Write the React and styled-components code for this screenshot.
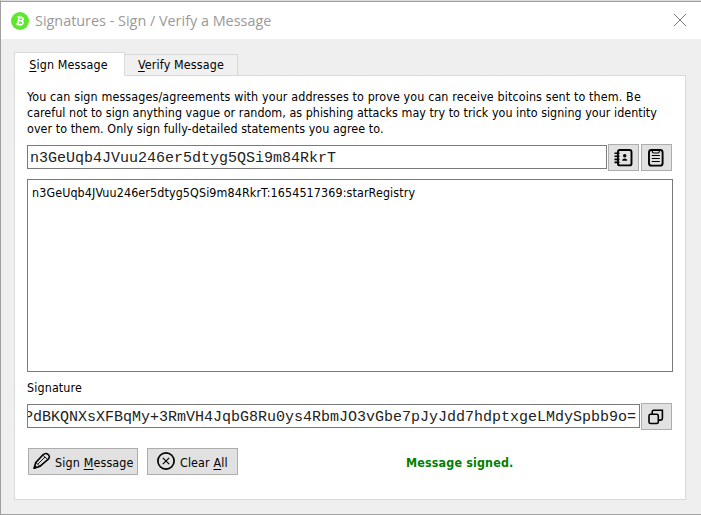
import React from "react";
import styled, { createGlobalStyle } from "styled-components";

const Global = createGlobalStyle`
  * { box-sizing: border-box; }
  html, body { margin: 0; padding: 0; background: #fff; overflow: hidden; }
`;

const Window = styled.main`
  width: 701px;
  height: 515px;
  display: flex;
  flex-direction: column;
  border-top: 1px solid #dcdcdc;
  border-left: 1px solid #a0a0a0;
  border-bottom: 1px solid #a0a0a0;
  background: #efefef;
  font-family: "DejaVu Sans Condensed", "DejaVu Sans", sans-serif;
  font-stretch: condensed;
  font-size: 12.4px;
  color: #000;
  overflow: hidden;
`;

const TitleBar = styled.header`
  height: 38px;
  flex: none;
  display: flex;
  align-items: center;
  padding: 0 14px 0 10px;
  border-top: 1px solid #a0a0a0;
  background: #fff;
`;

const Title = styled.h1`
  flex: 1;
  margin: 0 0 0 6px;
  font: 400 14.4px/20px "Open Sans", sans-serif;
  color: #999;
  white-space: nowrap;
`;

const CloseButton = styled.button`
  width: 14px;
  height: 14px;
  padding: 0;
  border: 0;
  background: none;
  margin-bottom: 1px;
`;

const Svg = styled.svg`
  display: block;
  flex: none;
`;

const TabBar = styled.nav`
  display: flex;
  align-items: flex-end;
  height: 24px;
  flex: none;
  margin: 13px 0 0 13px;
  position: relative;
`;

const Tab = styled.button`
  width: ${(p) => p.$width}px;
  height: ${(p) => (p.$active ? 24 : 22)}px;
  padding: ${(p) => (p.$active ? "2px 2px 0 0" : "0")};
  border: 1px solid #d9d9d9;
  border-left-width: ${(p) => (p.$active ? 1 : 0)}px;
  border-bottom-color: ${(p) => (p.$active ? "#fff" : "#d9d9d9")};
  background: ${(p) => (p.$active ? "#fff" : "#f0f0f0")};
  font: inherit;
  line-height: 20px;
  letter-spacing: ${(p) => p.$spacing}px;
  color: #000;
  white-space: nowrap;
`;

const Key = styled.u`
  text-decoration: underline;
  text-underline-offset: 2px;
  text-decoration-thickness: 1px;
  text-decoration-skip-ink: none;
`;

const Panel = styled.section`
  width: 672px;
  height: 425px;
  flex: none;
  margin: -1px 0 0 13px;
  padding: 13px 12px 0;
  border: 1px solid #d9d9d9;
  background: #fff;
`;

const Intro = styled.p`
  margin: 0;
  height: 55px;
  line-height: 16px;
`;

const Line = styled.span`
  display: block;
  white-space: nowrap;
  letter-spacing: ${(p) => p.$spacing}px;
`;

const FieldRow = styled.div`
  display: flex;
  align-items: flex-start;
  height: 27px;
  margin-top: ${(p) => p.$top || 0}px;
`;

const Field = styled.div`
  width: ${(p) => p.$width}px;
  height: 24px;
  flex: none;
  margin: 1px 1px 0 0;
  display: flex;
  justify-content: ${(p) => (p.$end ? "flex-end" : "flex-start")};
  padding: 0 3px 0 ${(p) => (p.$end ? 0 : 2)}px;
  border: 1px solid #7a7a7a;
  background: #fff;
  overflow: hidden;
  font: 15px/25px "Liberation Mono", monospace;
  color: #222;
  white-space: nowrap;
`;

const IconButton = styled.button`
  width: 31px;
  height: 27px;
  flex: none;
  margin-right: 2px;
  padding: 0 1px 0 0;
  display: flex;
  align-items: center;
  justify-content: center;
  border: 1px solid #adadad;
  background: #e1e1e1;
`;

const MessageBox = styled.div`
  width: 646px;
  height: 193px;
  margin-top: 8px;
  padding: 5px 4px;
  border: 1px solid #7a7a7a;
  line-height: 16px;
`;

const Label = styled.div`
  margin-top: 8px;
  height: 16px;
  line-height: 16px;
  letter-spacing: ${(p) => p.$spacing}px;
`;

const Actions = styled.footer`
  display: flex;
  align-items: center;
  margin: 18px 0 0 1px;
`;

const ActionButton = styled.button`
  width: ${(p) => p.$width}px;
  height: 27px;
  margin-right: 9px;
  padding: 0 0 1px ${(p) => p.$left}px;
  display: flex;
  align-items: center;
  gap: ${(p) => p.$gap}px;
  border: 1px solid #adadad;
  background: #e1e1e1;
  font: inherit;
  line-height: 16px;
  color: #000;
  white-space: nowrap;
  letter-spacing: ${(p) => p.$spacing}px;
`;

const Caption = styled.span`
  padding-top: 3px;
`;

const Status = styled.strong`
  margin-left: 159px;
  padding-top: 2px;
  line-height: 16px;
  color: #008000;
  letter-spacing: ${(p) => p.$spacing}px;
`;

const CoinIcon = () => (
  <Svg width="18" height="18" viewBox="0 0 18 18">
    <circle cx="9" cy="9" r="9" fill="#5fe62f" />
    <g transform="rotate(10 9 9)" fill="none" stroke="#fff" strokeWidth="1.5">
      <path d="M5.6 5.5h4.6a1.6 1.6 0 0 1 0 3.3H7.3h3.2a1.8 1.8 0 0 1 0 3.6H5.6M7.4 5.5v6.9" />
      <path d="M7.9 3.9v1.6M9.8 3.9v1.6M7.9 12.4V14M9.8 12.4V14" strokeWidth="1" />
    </g>
  </Svg>
);

const CloseIcon = () => (
  <Svg width="14" height="14" viewBox="0 0 14 14">
    <path d="M1 1l12 12M13 1L1 13" stroke="#777" strokeWidth="1" />
  </Svg>
);

const AddressBookIcon = () => (
  <Svg width="20" height="20" viewBox="0 0 20 20" fill="none" stroke="#000">
    <rect x="4.9" y="2" width="13.6" height="15.4" rx="2" strokeWidth="1.9" />
    <path d="M1.5 5.3h5M1.5 8.3h5M1.5 11.4h5M1.5 14.4h5" strokeWidth="1.6" />
    <circle cx="11.7" cy="7.8" r="1.7" fill="#000" stroke="none" />
    <path d="M9.2 12.8c0-3 5-3 5 0z" fill="#000" stroke="none" />
  </Svg>
);

const ClipboardIcon = () => (
  <Svg width="20" height="20" viewBox="0 0 20 20" fill="none" stroke="#000">
    <rect x="3" y="2" width="13.6" height="15.6" rx="2.4" strokeWidth="1.9" />
    <path d="M6.3 2.2v1.4q0 1.4 1.4 1.4h4.2q1.4 0 1.4-1.4V2.2" strokeWidth="1.1" />
    <path d="M5.8 7.5h8M5.8 10.5h8M5.8 13.5h8" strokeWidth="1.1" />
  </Svg>
);

const CopyIcon = () => (
  <Svg width="20" height="20" viewBox="0 0 20 20" fill="none" stroke="#000" strokeWidth="1.6">
    <rect x="3" y="7.3" width="9.3" height="9.2" rx="1.6" />
    <path d="M6.2 7V4.9Q6.2 3.3 7.8 3.3h8.6v8.2q0 1.6-1.6 1.6H12.6" />
  </Svg>
);

const PencilIcon = () => (
  <Svg width="18" height="18" viewBox="0 0 18 18" fill="none" stroke="#000" strokeLinejoin="round">
    <path d="M1.1 16.3L2.7 10.6 10 2.8Q12.6.5 15 2.3t.6 4.6L7.2 14.2z" strokeWidth="1.6" />
    <path d="M2.8 10.6l4.3 3.7M4.8 12.2L12 5M9.9 3.2l4.8 4.3" strokeWidth="0.9" />
    <path d="M1.1 16.3l.8-2.8 2 1.9z" fill="#000" />
  </Svg>
);

const ClearIcon = () => (
  <Svg width="18" height="18" viewBox="0 0 18 18" fill="none" stroke="#000">
    <circle cx="9" cy="9" r="8.1" strokeWidth="1.7" />
    <path d="M5.8 5.8l6.4 6.4M12.2 5.8l-6.4 6.4" strokeWidth="1.2" />
  </Svg>
);

export default function App() {
  return (
    <>
      <Global />
      <Window>
        <TitleBar>
          <CoinIcon />
          <Title>Signatures - Sign / Verify a Message</Title>
          <CloseButton aria-label="Close"><CloseIcon /></CloseButton>
        </TitleBar>
        <TabBar>
          <Tab $active $width={111} $spacing={0.15}><Key>S</Key>ign Message</Tab>
          <Tab $width={113} $spacing={0.15}><Key>V</Key>erify Message</Tab>
        </TabBar>
        <Panel>
          <Intro>
            <Line $spacing={0.13}>You can sign messages/agreements with your addresses to prove you can receive bitcoins sent to them. Be</Line>
            <Line $spacing={0.035}>careful not to sign anything vague or random, as phishing attacks may try to trick you into signing your identity</Line>
            <Line $spacing={0.07}>over to them. Only sign fully-detailed statements you agree to.</Line>
          </Intro>
          <FieldRow>
            <Field $width={580}>n3GeUqb4JVuu246er5dtyg5QSi9m84RkrT</Field>
            <IconButton aria-label="Choose address"><AddressBookIcon /></IconButton>
            <IconButton aria-label="Paste address"><ClipboardIcon /></IconButton>
          </FieldRow>
          <MessageBox>
            <Line $spacing={0.12}>n3GeUqb4JVuu246er5dtyg5QSi9m84RkrT:1654517369:starRegistry</Line>
          </MessageBox>
          <Label $spacing={0.14}>Signature</Label>
          <FieldRow $top={7}>
            <Field $end $width={613}>PdBKQNXsXFBqMy+3RmVH4JqbG8Ru0ys4RbmJO3vGbe7pJyJdd7hdptxgeLMdySpbb9o=</Field>
            <IconButton aria-label="Copy signature"><CopyIcon /></IconButton>
          </FieldRow>
          <Actions>
            <ActionButton $width={110} $left={4} $gap={4} $spacing={0.15}>
              <PencilIcon />
              <Caption>Sign <Key>M</Key>essage</Caption>
            </ActionButton>
            <ActionButton $width={91} $left={9} $gap={5} $spacing={0.12}>
              <ClearIcon />
              <Caption>Clear <Key>A</Key>ll</Caption>
            </ActionButton>
            <Status $spacing={0.16}>Message signed.</Status>
          </Actions>
        </Panel>
      </Window>
    </>
  );
}
